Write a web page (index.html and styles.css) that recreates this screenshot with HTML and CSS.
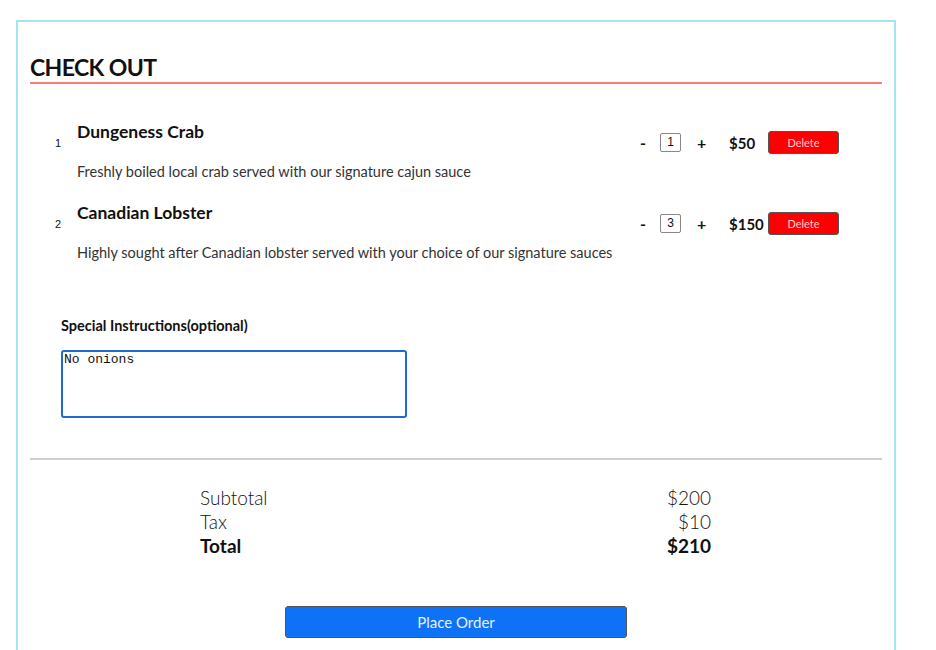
FILE: index.html
```html
<!DOCTYPE html>
<html>
<head>
<meta charset="utf-8">
<link rel="stylesheet" href="styles.css">
</head>
<body>
<div class="card">
  <h1 class="title">CHECK OUT</h1>
  <ol class="items">
    <li class="item">
      <span class="num">1</span>
      <div class="info">
        <div class="name">Dungeness Crab</div>
        <div class="desc">Freshly boiled local crab served with our signature cajun sauce</div>
      </div>
      <div class="controls">
        <span class="op">-</span>
        <span class="qty">1</span>
        <span class="op">+</span>
        <span class="price">$50</span>
        <button class="delete">Delete</button>
      </div>
    </li>
    <li class="item">
      <span class="num">2</span>
      <div class="info">
        <div class="name">Canadian Lobster</div>
        <div class="desc">Highly sought after Canadian lobster served with your choice of our signature sauces</div>
      </div>
      <div class="controls">
        <span class="op">-</span>
        <span class="qty">3</span>
        <span class="op">+</span>
        <span class="price">$150</span>
        <button class="delete">Delete</button>
      </div>
    </li>
  </ol>
  <div class="special">
    <label class="label">Special Instructions(optional)</label>
    <div class="textarea">No onions</div>
  </div>
  <hr class="divider">
  <div class="summary">
    <div class="row"><span>Subtotal</span><span>$200</span></div>
    <div class="row"><span>Tax</span><span>$10</span></div>
    <div class="row total"><span>Total</span><span>$210</span></div>
  </div>
  <div class="order-wrap">
    <button class="order">Place Order</button>
  </div>
</div>
</body>
</html>
```
FILE: styles.css
```css
body {
  margin: 0;
  font-family: Lato, "Open Sans", sans-serif;
  color: #111;
  background: #fff;
}
.card {
  margin: 20px 0 0 16px;
  width: 852px;
  height: 640px;
  border: 2px solid #a6e3f1;
  border-bottom: none;
  padding: 0 12px;
}
.title {
  margin: 0;
  padding-top: 31px;
  font-size: 23px;
  font-weight: 700;
  line-height: 28px;
  letter-spacing: -0.6px;
  padding-bottom: 1px;
  border-bottom: 2px solid #f47c7c;
}
.items {
  list-style: none;
  margin: 0;
  padding: 0;
  margin-top: 40px;
}
.item {
  display: flex;
  align-items: flex-start;
  height: 81px;
}
.num {
  font-family: "Liberation Sans", Arial, sans-serif;
  font-size: 11px;
  width: 22px;
  padding-left: 25px;
  margin-top: 13px;
}
.info {
  flex: 1;
}
.name {
  font-size: 17.5px;
  font-weight: 700;
  line-height: 22px;
  margin-top: -3px;
}
.desc {
  font-size: 14.5px;
  color: #333;
  margin-top: 20px;
  line-height: 18px;
}
.controls {
  display: flex;
  align-items: center;
  margin-top: 7px;
  margin-right: 43px;
}
.op {
  font-weight: 700;
  font-size: 16px;
  width: 12px;
}
.op:first-child {
  width: 15px;
}
.qty {
  font-family: "Liberation Sans", Arial, sans-serif;
  font-size: 12px;
  width: 19px;
  height: 17px;
  border: 1px solid #888;
  border-radius: 2px;
  text-align: center;
  line-height: 17px;
  margin: 0 16px 0 5px;
}
.price {
  font-weight: 700;
  font-size: 15px;
  width: 39px;
  margin-left: 20px;
}
.delete {
  width: 71px;
  height: 23px;
  background: #ff0000;
  color: #ffd0d0;
  border: 1px solid #555;
  border-radius: 3px;
  font-family: Lato, sans-serif;
  font-size: 11px;
  padding: 0;
}
.special {
  padding-left: 31px;
  margin-top: 31px;
}
.label {
  display: block;
  font-size: 14.5px;
  font-weight: 700;
  line-height: 17px;
}
.textarea {
  margin-top: 16px;
  width: 340px;
  height: 64px;
  border: 2px solid #1c6ad6;
  border-radius: 3px;
  font-family: "Liberation Mono", "Courier New", monospace;
  font-size: 13px;
  line-height: 15px;
  padding: 0 1px;
}
.divider {
  margin: 40px 0 0 0;
  border: none;
  border-top: 2px solid #d0d0d0;
}
.summary {
  margin: 26px 0 0 170px;
  width: 511px;
}
.row {
  display: flex;
  justify-content: space-between;
  font-size: 19px;
  font-weight: 300;
  line-height: 24px;
}
.row.total {
  font-weight: 700;
}
.order-wrap {
  display: flex;
  justify-content: center;
  margin-top: 48px;
}
.order {
  width: 342px;
  height: 32px;
  background: #0d72f6;
  color: #e6f0ff;
  border: 1px solid #555;
  border-radius: 3px;
  font-family: Lato, sans-serif;
  font-size: 15px;
}
```
